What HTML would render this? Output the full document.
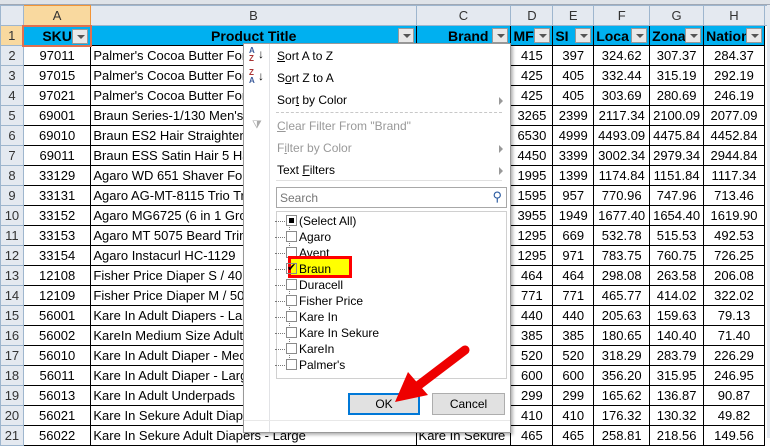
<!DOCTYPE html>
<html><head><meta charset="utf-8">
<style>
*{margin:0;padding:0;box-sizing:border-box}
body{width:770px;height:438px;overflow:hidden;background:#fff;font-family:"Liberation Sans",sans-serif;font-size:13px;position:relative}
#top{position:absolute;left:0;top:0;width:770px;height:5px;background:#dfe3e8;border-bottom:1px solid #a0a8b4}
table{position:absolute;left:0;top:5px;border-collapse:collapse;table-layout:fixed}
td{height:20px;padding:0 2px;white-space:nowrap;overflow:hidden;border:1px solid #000;text-align:center;color:#000}
td.rh{background:#e4e9f0;border:1px solid #9eb6ce;color:#333;text-align:center;padding:0}
tr.ch td{background:#e4e9f0;border:1px solid #9eb6ce;color:#333;font-size:13px}
tr.ch td.sel{background:#f9d99f;border-color:#f29436}
td.l{text-align:left}
tr.hd td{background:#00b0f0;font-weight:bold;position:relative;text-align:center;font-size:14px}
.fb{position:absolute;right:2px;top:2px;width:16px;height:15px;background:#e8e8e8;border:1px solid #999}
.fb:after{content:"";position:absolute;left:4px;top:5px;border-left:4px solid transparent;border-right:4px solid transparent;border-top:4px solid #555}
#pop{position:absolute;left:243px;top:43px;width:268px;height:390px;background:#fff;border:1px solid #999;box-shadow:2px 2px 3px rgba(0,0,0,.3)}
#strip{position:absolute;left:0;top:0;width:26px;height:388px;background:#fff;border-right:1px solid #e2e3e6}
.mi{position:absolute;left:33px;font-size:12px;color:#000}
.dis{color:#999}
.sub{position:absolute;left:255px;border-top:4px solid transparent;border-bottom:4px solid transparent;border-left:4px solid #999}
.sep{position:absolute;left:32px;right:8px;border-top:1px dashed #c8c8c8}
#search{position:absolute;left:32px;top:143px;width:231px;height:21px;border:1px solid #a8a8a8;font-size:12px;color:#777;padding:3px 3px}
#list{position:absolute;left:32px;top:167px;width:231px;height:168px;border:1px solid #d0d0d0}
.it{position:absolute;left:22px;font-size:12px;height:16px;line-height:16px}
.cb{position:absolute;left:-13px;top:2px;width:11px;height:11px;border:1px solid #8a8a8a;background:#fff}
.dot{position:absolute;left:-24px;top:8px;width:10px;border-top:1px dotted #777}
.btn{position:absolute;top:349px;height:22px;background:#e1e1e1;border:1px solid #adadad;font-size:12px;text-align:center;line-height:20px}
</style></head><body>
<div id="top"></div>
<table>
<colgroup><col style="width:23px"><col style="width:68px"><col style="width:327px"><col style="width:95px"><col style="width:42px"><col style="width:41px"><col style="width:56px"><col style="width:54px"><col style="width:61px"><col style="width:3px"></colgroup>
<tr class="ch"><td class="rh"></td><td class="sel">A</td><td>B</td><td>C</td><td>D</td><td>E</td><td>F</td><td>G</td><td>H</td><td></td></tr>
<tr class="hd"><td class="rh" style="background:#f9d99f;font-weight:normal;font-size:13px">1</td><td style="border:2px solid #e07050">SKU<span class="fb"></span></td><td>Product Title<span class="fb"></span></td><td style="text-align:right;padding-right:22px">Brand<span class="fb"></span></td><td style="text-align:left">MF<span class="fb"></span></td><td style="text-align:left">SI<span class="fb"></span></td><td style="text-align:left">Loca<span class="fb"></span></td><td style="text-align:left">Zona<span class="fb"></span></td><td style="text-align:left">Nation<span class="fb"></span></td><td style="background:#fff;border:none"></td></tr>
<tr><td class="rh">2</td><td>97011</td><td class="l">Palmer's Cocoa Butter Formula</td><td></td><td>415</td><td>397</td><td>324.62</td><td>307.37</td><td>284.37</td><td style="border:none"></td></tr>
<tr><td class="rh">3</td><td>97015</td><td class="l">Palmer's Cocoa Butter Formula</td><td></td><td>425</td><td>405</td><td>332.44</td><td>315.19</td><td>292.19</td><td style="border:none"></td></tr>
<tr><td class="rh">4</td><td>97021</td><td class="l">Palmer's Cocoa Butter Formula</td><td></td><td>425</td><td>405</td><td>303.69</td><td>280.69</td><td>246.19</td><td style="border:none"></td></tr>
<tr><td class="rh">5</td><td>69001</td><td class="l">Braun Series-1/130 Men's Shaver</td><td></td><td>3265</td><td>2399</td><td>2117.34</td><td>2100.09</td><td>2077.09</td><td style="border:none"></td></tr>
<tr><td class="rh">6</td><td>69010</td><td class="l">Braun ES2 Hair Straightener</td><td></td><td>6530</td><td>4999</td><td>4493.09</td><td>4475.84</td><td>4452.84</td><td style="border:none"></td></tr>
<tr><td class="rh">7</td><td>69011</td><td class="l">Braun ESS Satin Hair 5 Hair</td><td></td><td>4450</td><td>3399</td><td>3002.34</td><td>2979.34</td><td>2944.84</td><td style="border:none"></td></tr>
<tr><td class="rh">8</td><td>33129</td><td class="l">Agaro WD 651 Shaver For Men</td><td></td><td>1995</td><td>1399</td><td>1174.84</td><td>1151.84</td><td>1117.34</td><td style="border:none"></td></tr>
<tr><td class="rh">9</td><td>33131</td><td class="l">Agaro AG-MT-8115 Trio Trimmer</td><td></td><td>1595</td><td>957</td><td>770.96</td><td>747.96</td><td>713.46</td><td style="border:none"></td></tr>
<tr><td class="rh">10</td><td>33152</td><td class="l">Agaro MG6725 (6 in 1 Grooming</td><td></td><td>3955</td><td>1949</td><td>1677.40</td><td>1654.40</td><td>1619.90</td><td style="border:none"></td></tr>
<tr><td class="rh">11</td><td>33153</td><td class="l">Agaro MT 5075 Beard Trimmer</td><td></td><td>1295</td><td>669</td><td>532.78</td><td>515.53</td><td>492.53</td><td style="border:none"></td></tr>
<tr><td class="rh">12</td><td>33154</td><td class="l">Agaro Instacurl HC-1129</td><td></td><td>1295</td><td>971</td><td>783.75</td><td>760.75</td><td>726.25</td><td style="border:none"></td></tr>
<tr><td class="rh">13</td><td>12108</td><td class="l">Fisher Price Diaper S / 40</td><td></td><td>464</td><td>464</td><td>298.08</td><td>263.58</td><td>206.08</td><td style="border:none"></td></tr>
<tr><td class="rh">14</td><td>12109</td><td class="l">Fisher Price Diaper M / 50</td><td></td><td>771</td><td>771</td><td>465.77</td><td>414.02</td><td>322.02</td><td style="border:none"></td></tr>
<tr><td class="rh">15</td><td>56001</td><td class="l">Kare In Adult Diapers - Large</td><td></td><td>440</td><td>440</td><td>205.63</td><td>159.63</td><td>79.13</td><td style="border:none"></td></tr>
<tr><td class="rh">16</td><td>56002</td><td class="l">KareIn Medium Size Adult</td><td></td><td>385</td><td>385</td><td>180.65</td><td>140.40</td><td>71.40</td><td style="border:none"></td></tr>
<tr><td class="rh">17</td><td>56010</td><td class="l">Kare In Adult Diaper - Medium</td><td></td><td>520</td><td>520</td><td>318.29</td><td>283.79</td><td>226.29</td><td style="border:none"></td></tr>
<tr><td class="rh">18</td><td>56011</td><td class="l">Kare In Adult Diaper - Large</td><td></td><td>600</td><td>600</td><td>356.20</td><td>315.95</td><td>246.95</td><td style="border:none"></td></tr>
<tr><td class="rh">19</td><td>56013</td><td class="l">Kare In Adult Underpads</td><td></td><td>299</td><td>299</td><td>165.62</td><td>136.87</td><td>90.87</td><td style="border:none"></td></tr>
<tr><td class="rh">20</td><td>56021</td><td class="l">Kare In Sekure Adult Diapers</td><td></td><td>410</td><td>410</td><td>176.32</td><td>130.32</td><td>49.82</td><td style="border:none"></td></tr>
<tr><td class="rh">21</td><td>56022</td><td class="l">Kare In Sekure Adult Diapers - Large</td><td class="l">Kare In Sekure</td><td>465</td><td>465</td><td>258.81</td><td>218.56</td><td>149.56</td><td style="border:none"></td></tr>
</table>
<div style="position:absolute;left:767px;top:5px;width:3px;height:433px;background:#e4e9f0"></div>

<div id="pop">
<div id="strip"></div>
<div style="position:absolute;left:5px;top:3px;font-size:8px;line-height:8px;font-weight:bold;color:#3a5a9a">A<br><span style="color:#a33">Z</span></div><div style="position:absolute;left:14px;top:3px;font-size:12px">↓</div>
<div style="position:absolute;left:5px;top:25px;font-size:8px;line-height:8px;font-weight:bold;color:#a33">Z<br><span style="color:#3a5a9a">A</span></div><div style="position:absolute;left:14px;top:25px;font-size:12px">↓</div>
<div style="position:absolute;left:8px;top:75px;font-size:11px;color:#aaa">⧩</div>
<div class="mi" style="top:5px"><u>S</u>ort A to Z</div>
<div class="mi" style="top:27px">S<u>o</u>rt Z to A</div>
<div class="mi" style="top:49px">Sor<u>t</u> by Color</div><div class="sub" style="top:53px"></div>
<div class="sep" style="top:68px"></div>
<div class="mi dis" style="top:75px"><u>C</u>lear Filter From "Brand"</div>
<div class="mi dis" style="top:97px">F<u>i</u>lter by Color</div><div class="sub" style="top:101px"></div>
<div class="mi" style="top:119px">Text <u>F</u>ilters</div><div class="sub" style="top:123px"></div>
<div class="sep" style="top:136px;border-top-style:solid;border-color:#e0e0e0"></div>
<div id="search">Search<span style="position:absolute;right:4px;top:1px;color:#2a5aa0;font-size:13px">⚲</span></div>
<div id="list">
<div style="position:absolute;left:12px;top:10px;height:142px;border-left:1px dotted #777"></div>
<div class="it" style="top:1px"><span class="dot"></span><span class="cb"><span style="position:absolute;left:2px;top:2px;width:5px;height:5px;background:#000"></span></span>(Select All)</div>
<div class="it" style="top:17px"><span class="dot"></span><span class="cb"></span>Agaro</div>
<div class="it" style="top:33px"><span class="dot"></span><span class="cb"></span>Avent</div>
<div style="position:absolute;left:11px;top:44px;width:64px;height:22px;border:3px solid #f00;background:#ffff00"></div>
<div class="it" style="top:49px"><span class="dot"></span><span class="cb" style="background:transparent;font-size:11px;line-height:9px;text-align:center">✔</span>Braun</div>
<div class="it" style="top:65px"><span class="dot"></span><span class="cb"></span>Duracell</div>
<div class="it" style="top:81px"><span class="dot"></span><span class="cb"></span>Fisher Price</div>
<div class="it" style="top:97px"><span class="dot"></span><span class="cb"></span>Kare In</div>
<div class="it" style="top:113px"><span class="dot"></span><span class="cb"></span>Kare In Sekure</div>
<div class="it" style="top:129px"><span class="dot"></span><span class="cb"></span>KareIn</div>
<div class="it" style="top:145px"><span class="dot"></span><span class="cb"></span>Palmer's</div>
</div>
<div class="btn" style="left:104px;width:72px;border:2px solid #0078d7;line-height:18px">OK</div>
<div class="btn" style="left:188px;width:73px">Cancel</div>
<div style="position:absolute;left:0;right:0;top:376px;border-top:1px solid #e8e8e8"></div>
</div>
<svg style="position:absolute;left:0;top:0" width="770" height="438">
<line x1="465" y1="350" x2="415" y2="388" stroke="#e00" stroke-width="9" stroke-linecap="round"/>
<polygon points="395,402 408,372 428,395" fill="#e00"/>
</svg>
</body></html>
